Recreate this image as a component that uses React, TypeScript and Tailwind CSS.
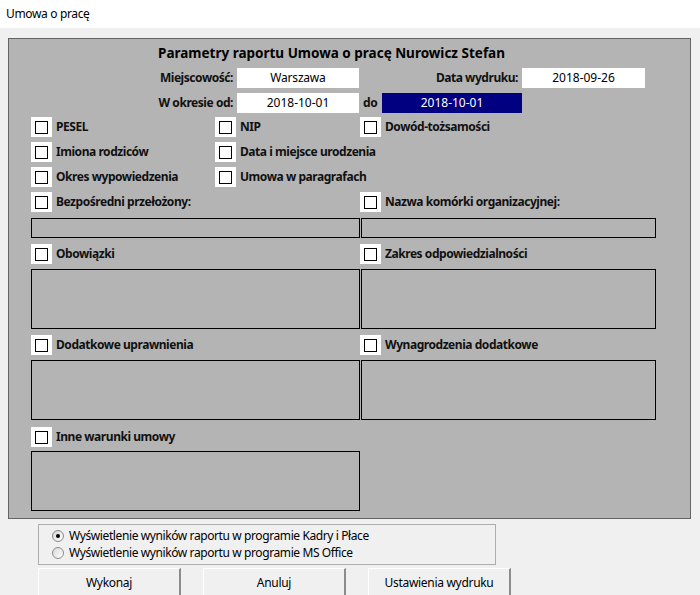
import React from "react";

const font = "font-['Noto_Sans',_'Liberation_Sans',_sans-serif]";

function Check({ label, className = "" }: { label: string; className?: string }) {
  return (
    <div className={`flex items-center h-[20px] ${className}`}>
      <div className="w-[21px] h-[20px] bg-white flex items-center justify-center shrink-0">
        <div className="w-[13px] h-[13px] border border-black bg-white" />
      </div>
      <span className="ml-[4px] text-[12px] font-bold tracking-[-0.45px] text-[#111] whitespace-nowrap leading-none">
        {label}
      </span>
    </div>
  );
}

function Field({ w, h }: { w: string; h: string }) {
  return <div className={`${w} ${h} border border-black bg-[#b4b4b4]`} />;
}

function Radio({ checked, label }: { checked?: boolean; label: string }) {
  return (
    <div className="flex items-center h-[17px]">
      <div className="w-[12px] h-[12px] rounded-full border border-[#8a8a8a] bg-gradient-to-br from-[#d8d8d8] to-white flex items-center justify-center">
        {checked && <div className="w-[4px] h-[4px] rounded-full bg-black" />}
      </div>
      <span className="ml-[5px] text-[12px] tracking-[-0.4px] text-black whitespace-nowrap leading-none">{label}</span>
    </div>
  );
}

function Button({ label, className = "" }: { label: string; className?: string }) {
  return (
    <div
      className={`w-[143px] h-[30px] bg-[#f0f0f0] border-t border-l border-t-white border-l-white border-r-2 border-b-2 border-r-[#8c8c8c] border-b-[#8c8c8c] flex items-start justify-center pt-[5px] text-[12px] tracking-[-0.3px] text-black ${className}`}
    >
      {label}
    </div>
  );
}

export default function App() {
  return (
    <div className={`w-[700px] h-[595px] bg-[#f0f0f0] overflow-hidden ${font}`}>
      {/* window caption */}
      <div className="h-[28px] bg-white flex items-center pl-[6px] text-[12px] tracking-[-0.35px] text-black">
        Umowa o pracę
      </div>

      {/* parameters panel */}
      <div className="mt-[10px] ml-[8px] w-[683px] h-[481px] border border-[#646464] bg-[#b4b4b4] relative">
        <div className="h-[29px] pt-[5px] pr-[36px] text-center text-[13.5px] font-bold text-black leading-[18px]">
          Parametry raportu Umowa o pracę Nurowicz Stefan
        </div>

        <div className="flex items-center h-[20px] text-[12px]">
          <div className="w-[224px] text-right font-bold tracking-[-0.45px] text-[#111]">Miejscowość:</div>
          <div className="ml-[4px] w-[122px] h-[20px] bg-white flex items-center justify-center text-black tracking-[-0.2px]">
            Warszawa
          </div>
          <div className="w-[159px] text-right font-bold tracking-[-0.45px] text-[#111]">Data wydruku:</div>
          <div className="ml-[4px] w-[123px] h-[20px] bg-white flex items-center justify-center text-black">2018-09-26</div>
        </div>

        <div className="flex items-center h-[20px] mt-[5px] text-[12px]">
          <div className="w-[224px] text-right font-bold tracking-[-0.45px] text-[#111]">W okresie od:</div>
          <div className="ml-[4px] w-[122px] h-[20px] bg-white flex items-center justify-center text-black">2018-10-01</div>
          <div className="ml-[4px] w-[19px] font-bold tracking-[-0.3px] text-[#111]">do</div>
          <div className="w-[140px] h-[20px] bg-[#000080] flex items-center justify-center text-white">2018-10-01</div>
        </div>

        <div className="pl-[22px] pt-[4px]">
          <div className="flex flex-col gap-[5px]">
            <div className="flex">
              <Check label="PESEL" className="w-[184px]" />
              <Check label="NIP" className="w-[145px]" />
              <Check label="Dowód-tożsamości" />
            </div>
            <div className="flex">
              <Check label="Imiona rodziców" className="w-[184px]" />
              <Check label="Data i miejsce urodzenia" />
            </div>
            <div className="flex">
              <Check label="Okres wypowiedzenia" className="w-[184px]" />
              <Check label="Umowa w paragrafach" />
            </div>
            <div className="flex">
              <Check label="Bezpośredni przełożony:" className="w-[329px]" />
              <Check label="Nazwa komórki organizacyjnej:" />
            </div>
          </div>

          <div className="flex mt-[6px] gap-[1px]">
            <Field w="w-[329px]" h="h-[20px]" />
            <Field w="w-[295px]" h="h-[20px]" />
          </div>

          <div className="flex mt-[6px]">
            <Check label="Obowiązki" className="w-[329px]" />
            <Check label="Zakres odpowiedzialności" />
          </div>
          <div className="flex mt-[5px] gap-[1px]">
            <Field w="w-[329px]" h="h-[60px]" />
            <Field w="w-[295px]" h="h-[60px]" />
          </div>

          <div className="flex mt-[6px]">
            <Check label="Dodatkowe uprawnienia" className="w-[329px]" />
            <Check label="Wynagrodzenia dodatkowe" />
          </div>
          <div className="flex mt-[5px] gap-[1px]">
            <Field w="w-[329px]" h="h-[60px]" />
            <Field w="w-[295px]" h="h-[60px]" />
          </div>

          <div className="flex mt-[7px]">
            <Check label="Inne warunki umowy" />
          </div>
          <div className="flex mt-[4px]">
            <Field w="w-[329px]" h="h-[60px]" />
          </div>
        </div>
      </div>

      {/* output choice */}
      <div className="mt-[5px] ml-[38px] w-[458px] h-[41px] border border-[#adadad] flex flex-col justify-center pl-[13px]">
        <Radio checked label="Wyświetlenie wyników raportu w programie Kadry i Płace" />
        <Radio label="Wyświetlenie wyników raportu w programie MS Office" />
      </div>

      {/* actions */}
      <div className="flex mt-[3px] ml-[38px]">
        <Button label="Wykonaj" />
        <Button label="Anuluj" className="ml-[22px]" />
        <Button label="Ustawienia wydruku" className="ml-[22px]" />
      </div>
    </div>
  );
}
